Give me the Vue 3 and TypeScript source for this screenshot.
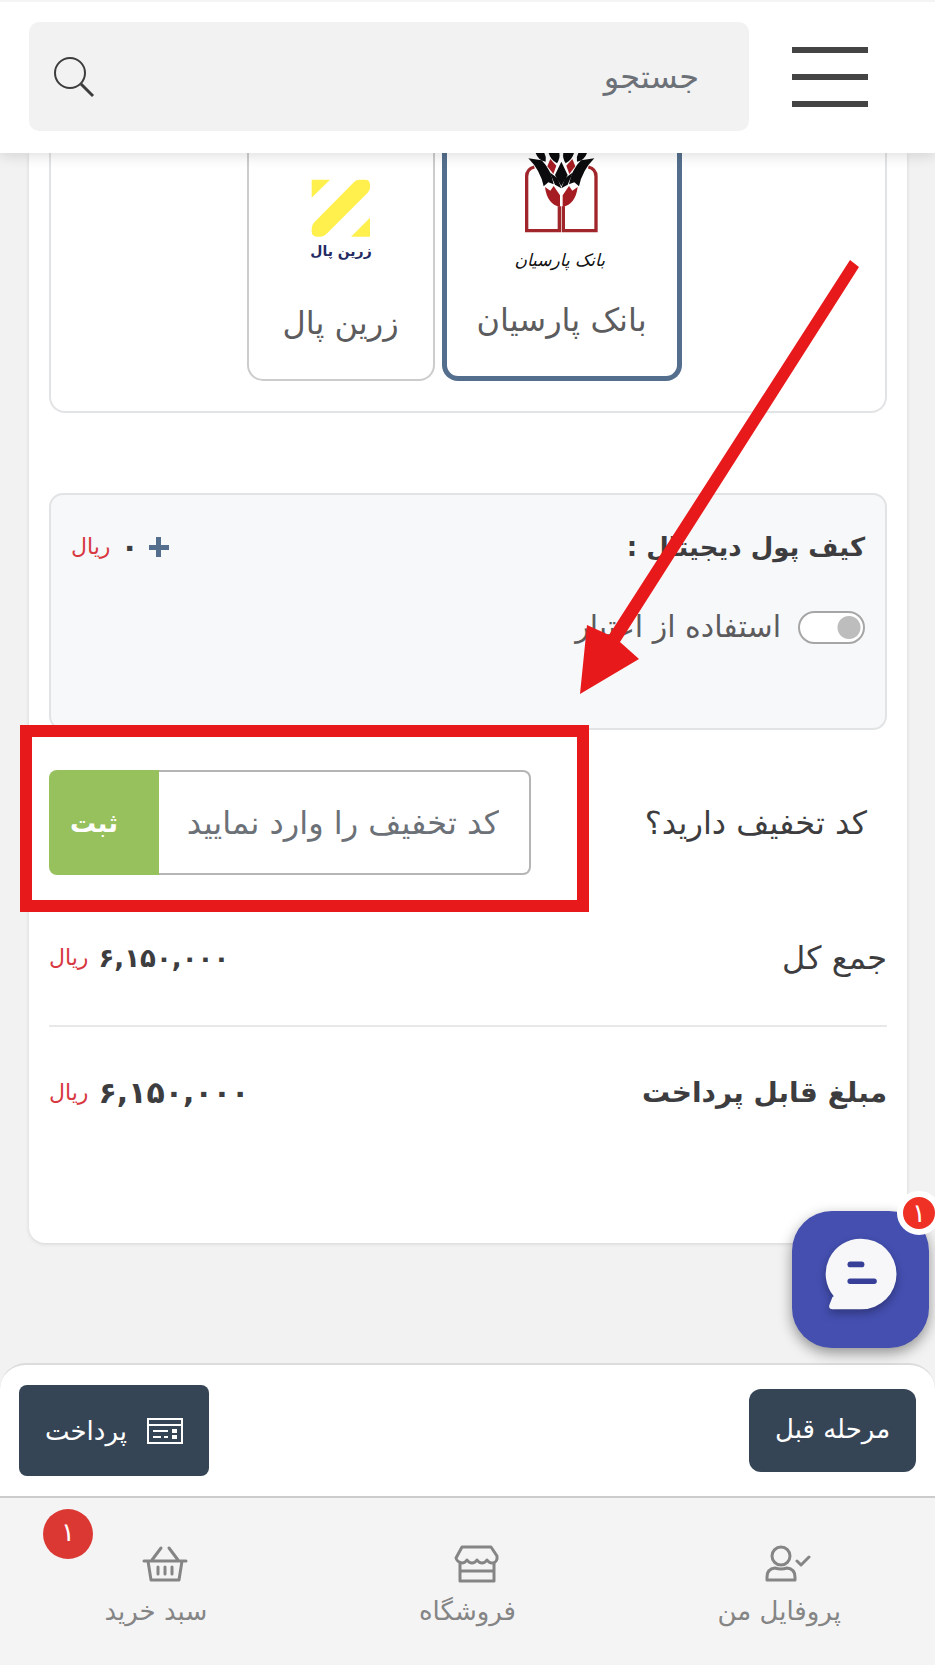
<script setup lang="ts">
import { ref } from 'vue'

interface PriceRow {
  label: string
  amount: string
  strong: boolean
}

interface NavItem {
  id: 'profile' | 'shop' | 'basket'
  label: string
  count?: string
}

const query = ref('')
const gateway = ref<'parsian' | 'zarinpal'>('parsian')
const useCredit = ref(false)
const coupon = ref('')

const rows: PriceRow[] = [
  { label: 'جمع کل', amount: '۶,۱۵۰,۰۰۰', strong: false },
  { label: 'مبلغ قابل پرداخت', amount: '۶,۱۵۰,۰۰۰', strong: true },
]

const navItems: NavItem[] = [
  { id: 'profile', label: 'پروفایل من' },
  { id: 'shop', label: 'فروشگاه' },
  { id: 'basket', label: 'سبد خرید', count: '۱' },
]
</script>

<template>
  <div class="page" dir="rtl" lang="fa">
    <header class="top">
      <button class="menu" type="button" aria-label="منو">
        <span></span><span></span><span></span>
      </button>
      <form class="search" role="search" @submit.prevent>
        <input v-model="query" type="text" placeholder="جستجو" aria-label="جستجو" />
        <button type="submit" aria-label="جستجو">
          <svg width="42" height="42" viewBox="0 0 42 42" fill="none" stroke="#3d3d3d" stroke-width="2">
            <circle cx="17" cy="17" r="15" />
            <path d="M28 28 40 40" stroke-width="3" />
          </svg>
        </button>
      </form>
    </header>

    <main class="content">
      <section class="card">
        <div class="gateways">
          <button class="gateway parsian" :class="{ selected: gateway === 'parsian' }" type="button" @click="gateway = 'parsian'">
            <svg width="97" height="125" viewBox="100 24 291 375">
              <g fill="none" stroke="#a0262b" stroke-width="10">
                <path d="M164 66Q141 72 141 94V257H239V184" />
                <path d="M326 66Q349 72 349 94V257H251V184" />
              </g>
              <g fill="#0b0b0d">
                <path d="M146 40 186 46Q214 74 222 118L206 112 192 124Q182 76 146 40Z" />
                <path d="M344 40 304 46Q276 74 268 118L284 112 298 124Q308 76 344 40Z" />
                <path d="M245 50 264 90 245 124 226 90Z" />
                <path d="M168 24H194Q201 36 198 50 176 47 168 24Z" />
                <path d="M322 24H296Q289 36 292 50 314 47 322 24Z" />
                <path d="M207 24H239Q242 40 232 55 213 45 207 24Z" />
                <path d="M283 24H251Q248 40 258 55 277 45 283 24Z" />
                <path d="M210 82 226 119 245 130 234 100Z" />
                <path d="M280 82 264 119 245 130 256 100Z" />
              </g>
              <g fill="#a51d22">
                <path d="M212 42 230 62 221 87 203 64Z" />
                <path d="M278 42 260 62 269 87 287 64Z" />
                <path d="M196 126 212 137 222 123 241 151V186Q202 177 196 126Z" />
                <path d="M294 126 278 137 268 123 249 151V186Q288 177 294 126Z" />
              </g>
              <text x="240" y="362" text-anchor="middle" font-size="51" font-style="italic" fill="#111" font-family="DejaVu Sans, sans-serif">بانک پارسیان</text>
            </svg>
            <span class="gateway-name">بانک پارسیان</span>
          </button>
          <button class="gateway zarinpal" :class="{ selected: gateway === 'zarinpal' }" type="button" @click="gateway = 'zarinpal'">
            <svg width="64" height="92" viewBox="88 70 192 276">
              <g fill="#fff04d">
                <path d="M96 78H151L96 132Z" />
                <path d="M271 192V249H214Z" />
                <path d="M224 84Q230 78 240 78H257Q271 78 271 94V102Q271 110 264 117L141 240Q132 249 122 249H112Q96 249 96 233V225Q96 214 104 206Z" />
              </g>
              <text x="184" y="308" text-anchor="middle" font-size="42" font-weight="700" fill="#252a63" font-family="DejaVu Sans, sans-serif">زرین پال</text>
            </svg>
            <span class="gateway-name">زرین پال</span>
          </button>
        </div>

        <div class="wallet">
          <div class="line">
            <h2>کیف پول دیجیتال :</h2>
            <div class="balance">
              <button class="plus" type="button" aria-label="افزایش اعتبار"></button>
              <b>۰</b>
              <span class="unit">ریال</span>
            </div>
          </div>
          <label class="credit">
            <input v-model="useCredit" type="checkbox" />
            <span>استفاده از اعتبار</span>
          </label>
        </div>

        <div class="coupon">
          <label for="coupon">کد تخفیف دارید؟</label>
          <form class="coupon-form" @submit.prevent>
            <input id="coupon" v-model="coupon" type="text" placeholder="کد تخفیف را وارد نمایید" />
            <button type="submit">ثبت</button>
          </form>
        </div>

        <dl class="prices">
          <div v-for="row in rows" :key="row.label" class="price" :class="{ strong: row.strong }">
            <dt>{{ row.label }}</dt>
            <dd><b dir="ltr">{{ row.amount }}</b><span class="unit">ریال</span></dd>
          </div>
        </dl>
      </section>

      <svg class="arrow" width="280" height="434" viewBox="0 0 280 434" fill="#e8191b" aria-hidden="true">
        <path d="M270 0 279 7 40 382 59 399 0 434 7 365 29 375Z" />
      </svg>
    </main>

    <section class="actions">
      <button class="chat" type="button" aria-label="گفتگو">
        <svg width="72" height="72" viewBox="192 171 221 221">
          <path fill="#f7f7f9" d="M303 173A108 108 0 0 1 303 390H215Q201 388 206 375L215 352 219 350A108 108 0 0 1 303 173Z" />
          <rect x="261" y="243" width="52" height="18" rx="9" fill="#373f99" />
          <rect x="261" y="295" width="90" height="17" rx="8" fill="#373f99" />
        </svg>
        <span class="chat-count">۱</span>
      </button>
      <button class="back" type="button">مرحله قبل</button>
      <button class="pay" type="button">
        <svg width="36" height="26" viewBox="0 0 36 26" fill="none" stroke="#fff" stroke-width="2">
          <path d="M1 1H35V25H1Z" />
          <path d="M1 7H35" />
          <path d="M6 13H21M6 19H14M17 19H21" />
          <path d="M25 13H30M25 19H30" stroke-width="4" />
        </svg>
        <span>پرداخت</span>
      </button>
    </section>

    <nav class="tabs">
      <a v-for="item in navItems" :key="item.id" href="#" class="tab" :class="item.id">
        <span v-if="item.count" class="count">{{ item.count }}</span>
        <svg width="46" height="38" viewBox="0 0 46 38" fill="none" stroke="#858585" stroke-width="3" stroke-linejoin="round" stroke-linecap="round">
          <template v-if="item.id === 'profile'">
            <circle cx="16" cy="11" r="9" />
            <path d="M2 35V32Q2 24 10 23 16 25 22 23 30 24 30 32V35Z" />
            <path d="M32 16 36 20 44 12" />
          </template>
          <template v-else-if="item.id === 'shop'">
            <path d="M8 2H37L43 11V14Q42 18 38 18 35 18 33 15 31 18 28 18 25 18 23 15 21 18 18 18 15 18 13 15 11 18 8 18 3 17 2 13Z" />
            <path d="M6 18V36H40V18M6 26H40" />
          </template>
          <template v-else>
            <path d="M2 16H44M6 16 9 35H37L40 16M10 15 19 3M36 15 27 3M16 22V29M23 22V29M30 22V29" />
          </template>
        </svg>
        <span>{{ item.label }}</span>
      </a>
    </nav>
  </div>
</template>

<style>
body {
  margin: 0;
  background: #f2f2f2;
}
</style>

<style scoped>
.page,
.page * {
  box-sizing: border-box;
}
.page {
  min-height: 100vh;
  display: flex;
  flex-direction: column;
  overflow: hidden;
  background: #f2f2f2;
  color: #3d3d3f;
  font-family: "DejaVu Sans", sans-serif;
  font-size: 32px;
  line-height: 40px;
}
button,
input {
  font: inherit;
  color: inherit;
  border: 0;
  margin: 0;
  padding: 0;
  background: none;
}
button svg {
  display: block;
}
.top {
  position: relative;
  z-index: 2;
  display: flex;
  gap: 43px;
  align-items: center;
  padding: 20px 67px 22px 29px;
  border-top: 2px solid #f4f4f4;
  background: #fff;
  box-shadow: 0 2px 14px rgba(0, 0, 0, 0.14);
}
.menu {
  width: 76px;
  display: grid;
  gap: 21px;
}
.menu span {
  height: 6px;
  background: #444;
}
.search {
  flex: 1;
  height: 109px;
  display: flex;
  align-items: center;
  padding: 0 50px 0 24px;
  border-radius: 10px;
  background: #f2f2f2;
}
.search input {
  flex: 1;
  min-width: 0;
  outline: none;
}
input::placeholder {
  color: #6c7178;
  opacity: 1;
}
.content {
  position: relative;
}
.card {
  margin: 0 28px 0 29px;
  padding: 0 20px 84px;
  border-radius: 0 0 16px 16px;
  background: #fff;
  box-shadow: 0 1px 4px rgba(0, 0, 0, 0.12);
}
.gateways {
  display: flex;
  justify-content: center;
  gap: 7px;
  padding: 0 8px 30px 0;
  border: 2px solid #e2e3e4;
  border-top: 0;
  border-radius: 0 0 16px 16px;
}
.gateway {
  display: flex;
  flex-direction: column;
  align-items: center;
  justify-content: flex-end;
  border: 2px solid #ccc;
  border-top: 0;
  border-radius: 0 0 16px 16px;
  color: #5c5c5e;
}
.gateway.selected {
  border-width: 0 5px 5px;
  border-color: #546f8d;
}
.parsian {
  width: 240px;
  padding-bottom: 36px;
}
.parsian svg {
  margin-bottom: 22px;
}
.zarinpal {
  width: 188px;
  padding-bottom: 36px;
}
.zarinpal svg {
  margin-bottom: 34px;
}
.gateway-name {
  white-space: nowrap;
}
.wallet {
  margin-top: 80px;
  min-height: 237px;
  padding: 32px 20px;
  border: 2px solid #e2e3e4;
  border-radius: 14px;
  background: #f7f8fa;
}
.line,
.balance,
.credit,
.coupon,
.price,
.price dd {
  display: flex;
  align-items: center;
}
.line,
.coupon,
.price {
  justify-content: space-between;
}
h2 {
  margin: 0;
  font-size: 26px;
  font-weight: 700;
}
.balance {
  gap: 10px;
}
.plus {
  width: 20px;
  height: 20px;
  background:
    linear-gradient(#546f8d, #546f8d) center / 20px 5px no-repeat,
    linear-gradient(#546f8d, #546f8d) center / 5px 20px no-repeat;
}
.unit {
  color: #d8383f;
  font-size: 22px;
}
.balance b {
  font-size: 30px;
}
.balance .unit {
  font-size: 22px;
}
.credit {
  margin-top: 40px;
  gap: 17px;
  color: #5c5c5e;
  font-size: 30px;
}
.credit input {
  appearance: none;
  width: 67px;
  height: 33px;
  border: 2px solid #a6a6a6;
  border-radius: 17px;
  background: radial-gradient(circle at 49px 50%, #bdbdbd 11px, transparent 12px) #fff;
}
.credit input:checked {
  background: radial-gradient(circle at 15px 50%, #97c15c 11px, transparent 12px) #fff;
}
.coupon {
  position: relative;
  margin-top: 40px;
  padding-inline-start: 20px;
}
.coupon-form {
  position: relative;
  width: 482px;
  height: 105px;
  display: flex;
  border-radius: 8px;
}
.coupon-form::after {
  content: "";
  position: absolute;
  inset: -45px -58px -37px -29px;
  border: 12px solid #e8191b;
  pointer-events: none;
}
.coupon-form input {
  flex: 1;
  min-width: 0;
  padding: 0 30px 0 20px;
  border: 2px solid #b5b5b5;
  border-left: 0;
  border-radius: 0 8px 8px 0;
  outline: none;
}
.coupon-form button {
  width: 110px;
  padding-right: 20px;
  padding-left: 0;
  border-radius: 8px 0 0 8px;
  background: #97c15c;
  color: #fff;
  font-size: 26px;
  font-weight: 700;
}
.prices {
  margin: 16px 0 0;
}
.price {
  height: 134px;
}
.price + .price {
  border-top: 2px solid #e8e8e8;
}
.price dd {
  margin: 0;
  gap: 10px;
}
.price b {
  font-size: 26px;
}
.price.strong dt {
  font-size: 28px;
  font-weight: 700;
}
.price.strong b {
  font-size: 30px;
}
.arrow {
  position: absolute;
  top: 107px;
  right: 75px;
  pointer-events: none;
}
.actions {
  position: relative;
  margin-top: auto;
  height: 133px;
  display: flex;
  align-items: center;
  justify-content: space-between;
  padding: 0 19px;
  border-top: 2px solid #dcdcdc;
  border-radius: 26px 26px 0 0;
  background: #fff;
}
.actions .back,
.actions .pay {
  padding-bottom: 4px;
  border-radius: 12px;
  background: #364556;
  color: #fff;
  font-size: 26px;
}
.back {
  height: 83px;
  width: 167px;
}
.pay {
  height: 91px;
  width: 190px;
  display: flex;
  align-items: center;
  justify-content: center;
  gap: 20px;
}
.actions .pay {
  padding-bottom: 0;
  border-radius: 8px;
}
.chat {
  position: absolute;
  right: 6px;
  bottom: 148px;
  width: 137px;
  height: 137px;
  display: grid;
  place-items: center;
  padding-bottom: 12px;
  border-radius: 40px;
  background: #444fb0;
  box-shadow: 0 5px 14px rgba(0, 0, 0, 0.4);
}
.chat svg {
  filter: drop-shadow(0 4px 4px rgba(0, 0, 0, 0.3));
}
.chat-count {
  position: absolute;
  top: -20px;
  right: -12px;
  width: 44px;
  height: 44px;
  border: 6px solid #fff;
  border-radius: 50%;
  background: #ee3124;
  color: #fff;
  font-size: 26px;
  line-height: 32px;
}
.tabs {
  height: 169px;
  display: flex;
  padding-top: 47px;
  border-top: 2px solid #ccc;
  background: #f4f4f5;
}
.tab {
  position: relative;
  flex: 1;
  display: flex;
  flex-direction: column;
  align-items: center;
  gap: 8px;
  color: #858585;
  font-size: 26px;
  text-decoration: none;
}
.tab svg {
  margin-left: 18px;
}
.count {
  position: absolute;
  top: -36px;
  left: 43px;
  width: 50px;
  height: 50px;
  border-radius: 50%;
  background: #dc3833;
  color: #fff;
  line-height: 46px;
  text-align: center;
}
</style>
